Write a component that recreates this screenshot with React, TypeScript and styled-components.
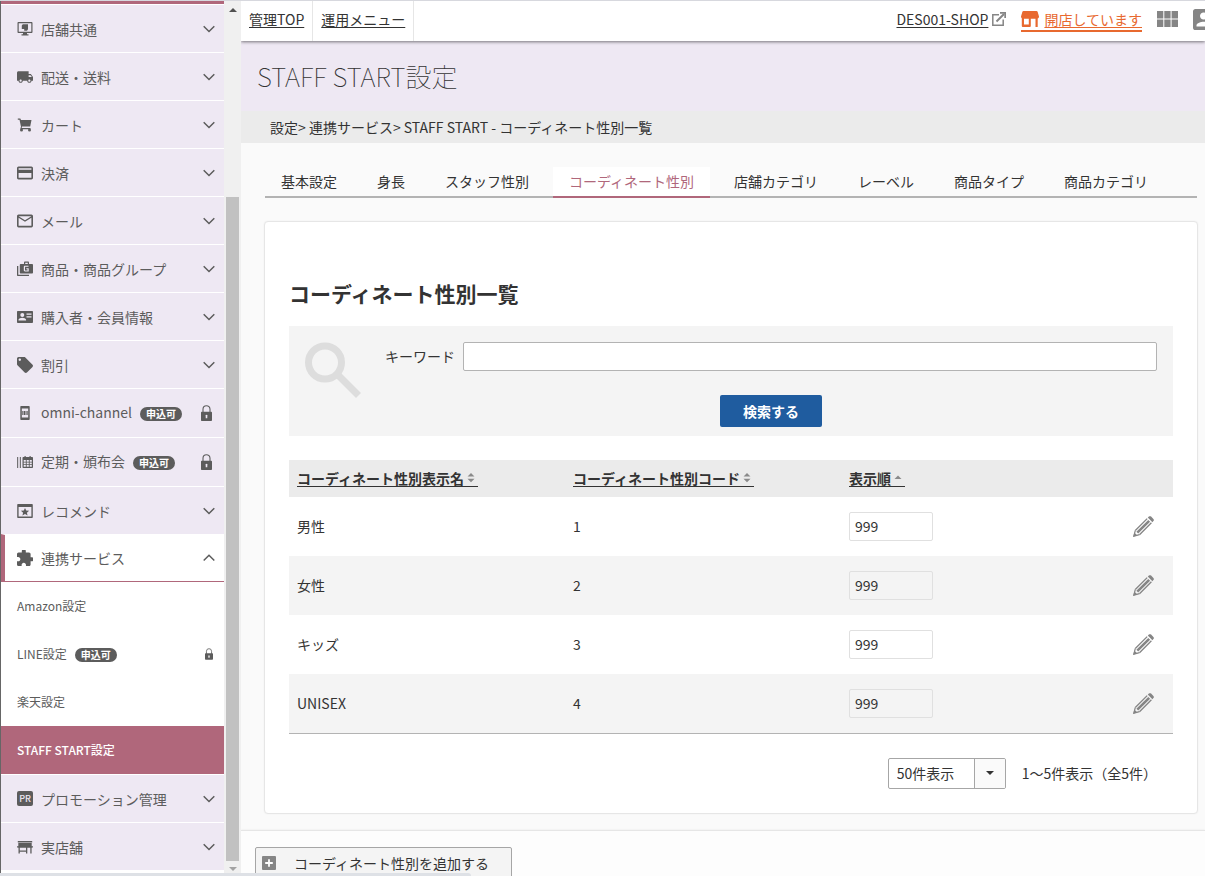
import React from "react";
import styled, { createGlobalStyle, css } from "styled-components";
import {
  MdCreditCard,
  MdExtension,
  MdLocalOffer,
  MdLocalShipping,
  MdMailOutline,
} from "react-icons/md";

const color = {
  text: "#333333",
  menuText: "#5c5c5c",
  accent: "#b0677b",
  lilac: "#eee8f3",
  line: "#b3b3b3",
  icon: "#858585",
  open: "#e8692f",
};

const GlobalStyle = createGlobalStyle`
  *, *::before, *::after { box-sizing: border-box; }
  body {
    margin: 0;
    background: #fafafa;
    color: ${color.text};
    font-family: "Noto Sans CJK JP", "Noto Sans", sans-serif;
    font-size: 14px;
    line-height: 20px;
  }
  button, input, select { font: inherit; color: inherit; }
  svg { display: block; flex: none; }
`;

/* ---------- frame ---------- */

const Shell = styled.div`
  display: flex;
  height: 100vh;
  border-top: 1px solid #d7d8de;
  overflow: hidden;
`;

const Sidebar = styled.aside`
  display: flex;
  flex: none;
  width: 241px;
  border-left: 1px solid #666;
  background: #fff;
`;

const Menu = styled.nav`
  flex: 1;
  border-top: 3px solid ${color.accent};
  overflow: auto;
  scrollbar-width: none;
`;

const Main = styled.div`
  flex: 1;
  min-width: 0;
  overflow: auto;
  scrollbar-width: none;
`;

const StatusBar = styled.div`
  position: absolute;
  left: 0;
  bottom: 0;
  width: 471px;
  height: 3px;
  border-top-right-radius: 3px;
  background: #dee1e6;
`;

/* ---------- scroll bar ---------- */

const Track = styled.div`
  display: flex;
  flex-direction: column;
  align-items: center;
  flex: none;
  width: 17px;
  background: #f0f0f0;
`;

const TrackEnd = styled.span<{ $height: number }>`
  display: grid;
  place-items: center;
  width: 17px;
  height: ${(p) => p.$height}px;
`;

const TrackSpace = styled.span`
  flex: 179;
`;

const Thumb = styled.span`
  flex: 664;
  width: 13px;
  background: #c1c1c1;
`;

/* ---------- side menu ---------- */

const List = styled.ul`
  margin: 0;
  padding: 0;
  list-style: none;
`;

const MenuButton = styled.button<{ $open?: boolean; $tall?: boolean }>`
  display: flex;
  align-items: center;
  gap: 8px;
  width: 100%;
  height: ${(p) => (p.$tall ? 49 : 48)}px;
  padding: 0 7px 0 16px;
  border: 0;
  border-top: 1px solid #fff;
  background: ${color.lilac};
  color: ${color.menuText};
  text-align: left;
  cursor: pointer;
  ${(p) =>
    p.$open &&
    css`
      padding-left: 12px;
      border-left: 4px solid ${color.accent};
      border-bottom: 1px solid ${color.accent};
      background: #fff;
    `}
`;

const SubLink = styled.a<{ $current?: boolean }>`
  display: flex;
  align-items: center;
  gap: 8px;
  height: 48px;
  padding: 0 7px 0 16px;
  background: ${(p) => (p.$current ? color.accent : "#fff")};
  color: ${(p) => (p.$current ? "#fff" : color.menuText)};
  font-size: 12px;
  font-weight: ${(p) => (p.$current ? 500 : 400)};
  text-decoration: none;
`;

const IconSlot = styled.span`
  display: grid;
  place-items: center;
  flex: none;
  width: 16px;
  height: 16px;
`;

const MenuLabel = styled.span<{ $tall?: boolean }>`
  padding-bottom: ${(p) => (p.$tall ? 2 : 0)}px;
  white-space: nowrap;
`;

const Badge = styled.span`
  margin-top: 1px;
  padding: 0 6px;
  border-radius: 7px;
  background: ${color.menuText};
  color: #fff;
  font-size: 10px;
  font-weight: 700;
  line-height: 14px;
`;

const EndSlot = styled(IconSlot)`
  margin-left: auto;
`;

const LockSlot = styled(EndSlot)`
  justify-items: start;
`;

const PrMark = styled.span`
  width: 16px;
  border-radius: 2px;
  background: ${color.menuText};
  color: ${color.lilac};
  font-size: 9px;
  font-weight: 500;
  line-height: 15px;
  text-align: center;
`;

/* ---------- top bar ---------- */

const TopBar = styled.header`
  position: relative;
  z-index: 1;
  display: flex;
  height: 40px;
  background: #fff;
  box-shadow: 0 1px 3px rgba(0, 0, 0, 0.5);
  overflow: hidden;
`;

const TopCell = styled.div`
  padding: 8px;
  border-right: 1px solid #e6e6e6;
`;

const TopLink = styled.a`
  color: inherit;
  text-underline-offset: 2px;
`;

const TopTools = styled.div`
  display: flex;
  align-items: center;
  gap: 15px;
  height: 36px;
  margin-left: auto;
  margin-right: -9px;
`;

const ShopLink = styled.span`
  display: flex;
  align-items: center;
  gap: 4px;
`;

const OpenLink = styled.a`
  display: flex;
  align-items: center;
  gap: 5px;
  margin-top: 3px;
  padding-bottom: 1px;
  border-bottom: 2px solid ${color.open};
  color: ${color.open};
  text-underline-offset: 2px;
`;

const ToolButton = styled.button`
  display: flex;
  padding: 0;
  border: 0;
  background: none;
`;

/* ---------- page head ---------- */

const TitleBand = styled.div`
  padding: 15px 16px;
  background: ${color.lilac};
`;

const Title = styled.h1`
  margin: 0;
  font-size: 26px;
  font-weight: 100;
  line-height: 40px;
`;

const Crumbs = styled.div`
  padding: 6px 29px;
  background: #ebebeb;
`;

const Content = styled.main`
  padding: 24px 7px 16px 23px;
`;

const Tabs = styled.nav`
  display: flex;
  gap: 8px;
  margin: 0 1px;
  border-bottom: 2px solid ${color.line};
`;

const Tab = styled.a<{ $current?: boolean }>`
  margin-bottom: -2px;
  padding: 4px 16px 5px;
  border-bottom: 2px solid ${(p) => (p.$current ? color.accent : "transparent")};
  background: ${(p) => (p.$current ? "#fff" : "transparent")};
  color: ${(p) => (p.$current ? color.accent : "inherit")};
  text-decoration: none;
  white-space: nowrap;
`;

/* ---------- card ---------- */

const Card = styled.section`
  margin-top: 23px;
  padding: 56px 24px 24px;
  border: 1px solid #e6e6e6;
  border-radius: 4px;
  background: #fff;
  box-shadow: 0 0 2px rgba(0, 0, 0, 0.06);
`;

const Heading = styled.h2`
  margin: 0 0 18px;
  font-size: 21px;
  font-weight: 700;
  line-height: 30px;
`;

const SearchPanel = styled.form`
  display: flex;
  gap: 24px;
  padding: 16px 16px 9px;
  background: #f4f4f4;
`;

const SearchFields = styled.div`
  display: flex;
  flex: 1;
  flex-direction: column;
  align-items: center;
  gap: 24px;
`;

const Field = styled.label`
  display: flex;
  align-items: center;
  gap: 8px;
  width: 100%;
  line-height: 21px;
`;

const KeywordInput = styled.input`
  flex: 1;
  height: 29px;
  padding: 0 6px;
  border: 1px solid ${color.line};
  border-radius: 2px;
  background: #fff;
`;

const SearchButton = styled.button`
  height: 32px;
  padding: 0 23px;
  border: 0;
  border-radius: 2px;
  background: #1f5c9f;
  color: #fff;
  font-weight: 700;
`;

const Table = styled.table`
  width: 100%;
  margin-top: 24px;
  border-collapse: collapse;
  border-bottom: 1px solid ${color.line};
  line-height: 21px;
  table-layout: fixed;
`;

const HeadCell = styled.th<{ $narrow?: boolean }>`
  width: ${(p) => (p.$narrow ? "56px" : "auto")};
  height: 37px;
  padding: 0 8px;
  background: #ebebeb;
  text-align: left;
`;

const SortLink = styled.a`
  display: inline-flex;
  align-items: center;
  border-bottom: 1px solid ${color.text};
  color: inherit;
  line-height: 16px;
  text-decoration: none;
`;

const Row = styled.tr`
  &:nth-child(even) {
    background: #f4f4f4;
  }
`;

const Cell = styled.td`
  height: 59px;
  padding: 0 8px;
`;

const ActionCell = styled(Cell)`
  padding: 0 16px;
`;

const OrderInput = styled.input`
  display: block;
  width: 84px;
  height: 29px;
  padding: 0 5px 1px;
  border: 1px solid #e0e0e0;
  border-radius: 2px;
  background: transparent;
`;

const EditButton = styled.button`
  display: block;
  padding: 0;
  border: 0;
  background: none;
`;

const Pager = styled.div`
  display: flex;
  align-items: center;
  justify-content: flex-end;
  gap: 16px;
  margin-top: 24px;
  padding-right: 16px;
`;

const SelectBox = styled.div`
  position: relative;
  width: 118px;
  height: 31px;
  border: 1px solid #a6a6a6;
  border-radius: 2px;
  background: #fff;
  overflow: hidden;
`;

const Select = styled.select`
  width: 100%;
  height: 100%;
  padding: 0 8px;
  border: 0;
  background: none;
  appearance: none;
`;

const SelectArrow = styled.span`
  position: absolute;
  top: 0;
  right: 0;
  bottom: 0;
  display: grid;
  place-items: center;
  width: 31px;
  border-left: 1px solid #a6a6a6;
  background: #fafafa;
  pointer-events: none;
`;

const Footer = styled.footer`
  padding: 16px 14px;
  border-top: 1px solid #e6e6e6;
  background: #fdfdfd;
  box-shadow: 0 0 2px rgba(0, 0, 0, 0.08);
`;

const AddButton = styled.button`
  display: flex;
  align-items: center;
  gap: 18px;
  height: 34px;
  padding: 0 22px 2px 6px;
  border: 1px solid #a6a6a6;
  border-radius: 2px;
  background: #f4f4f4;
`;

/* ---------- drawings ---------- */

const small = { width: 16, height: 16, viewBox: "0 0 16 16", fill: "currentColor", "aria-hidden": true };

const IconMonitor = () => (
  <svg {...small}>
    <path d="M1.5 1h13c.5 0 1 .4 1 1v9c0 .6-.5 1-1 1H10v1.300h1.500V14.500h-7V13.300H6V12H1.500c-.5 0-1-.4-1-1V2c0-.6.5-1 1-1zm.2 1.200v8.600h12.600V2.200z" fillRule="evenodd" />
    <path d="M4.800 4.500 5.800 3.200h5.200V8.200l-1 1.500H7.200V8H4.800z" />
  </svg>
);

const IconCart = () => (
  <svg {...small}>
    <path d="M.8 1.500h2.500l.7 1.500h10.500l-1.300 6.500H5l-.3 1.500H13.500v1.200H3.200L4 9.800 2.500 2.700H.8z" />
    <circle cx="4.500" cy="13" r="1.500" />
    <circle cx="12.500" cy="13" r="1.500" />
  </svg>
);

const IconGroup = () => (
  <svg {...small}>
    <path d="M0 5h1.300v8.700H12V15H1c-.6 0-1-.4-1-1z" />
    <path
      fillRule="evenodd"
      d="M3.800 3H7V1.500c0-.5.4-1 1-1h3c.6 0 1 .5 1 1V3h3c.5 0 1 .4 1 1v7.500c0 .6-.5 1-1 1H3.800c-.5 0-1-.4-1-1V4c0-.6.5-1 1-1zM8.200 3h2.600V1.700H8.200zM8 4.700c-.7 0-1.200.5-1.200 1.200v3.400c0 .7.5 1.200 1.200 1.200h3.700V7.200H9.300v1h1.200v1.200H8V5.800h3.500V4.700z"
    />
  </svg>
);

const IconMember = () => (
  <svg {...small}>
    <path
      fillRule="evenodd"
      d="M1 2h14c.6 0 1 .4 1 1v10c0 .5-.4 1-1 1H1c-.6 0-1-.5-1-1V3c0-.6.4-1 1-1zm4.300 2a2 2 0 1 0 0 4 2 2 0 0 0 0-4zM1.500 11.500h7.600v-.7c0-1.300-2.500-2-3.800-2s-3.800.7-3.800 2zM9.500 4.500v1.300h5V4.500zm0 2.700v1.300h5V7.200z"
    />
  </svg>
);

const IconPhone = () => (
  <svg {...small}>
    <path
      fillRule="evenodd"
      d="M4.300 1h7.400c.6 0 1 .4 1 1v12c0 .6-.4 1-1 1H4.300c-.6 0-1-.4-1-1V2c0-.6.4-1 1-1zm.5 2.500v9h6.400v-9z"
    />
    <path d="M5.300 6h1.200v4H5.300zM7 6h1.200v4H7zM8.700 6h.6v4h-.6zM9.700 6h1v4h-1z" />
  </svg>
);

const IconCalendar = () => (
  <svg {...small}>
    <path d="M0 3h1.200v11H0zM2.800 3H4v11H2.800z" opacity=".85" />
    <path
      fillRule="evenodd"
      d="M6.500 3h1V2h1.200v1h3.800V2h1.200v1H15c.6 0 1 .4 1 1v9c0 .6-.4 1-1 1H6.500c-.6 0-1-.4-1-1V4c0-.6.4-1 1-1zm.2 3v1.800h2.100V6zm3 0v1.800h2.100V6zm3 0v1.800h2.100V6zM6.700 8.600v1.700h2.100V8.600zm3 0v1.700h2.100V8.600zm3 0v1.700h2.100V8.600zM6.700 11v1.800h2.100V11zm3 0v1.800h2.100V11zm3 0v1.800h2.100V11z"
    />
  </svg>
);

const IconStarWindow = () => (
  <svg {...small}>
    <path
      fillRule="evenodd"
      d="M1.200 1h13.600c.6 0 1 .4 1 1v12c0 .6-.4 1-1 1H1.200c-.6 0-1-.4-1-1V2c0-.6.4-1 1-1zM1.600 4v9.600h12.800V4z"
    />
    <path d="m8 4.900 1.200 2.700 2.900.2-2.200 1.900.7 2.900L8 11l-2.600 1.600.7-2.900-2.200-1.900 2.900-.2z" />
  </svg>
);

const IconRealShop = () => (
  <svg {...small}>
    <path d="M.8 2h14.400v1.400H.8zM1.300 4h13.400v4.400H1.300z" />
    <path d="M0 7.300h16v1.300H0zM1.500 8h1.300v6.500H1.500zM9 8h1.300v6.500H9zM13.300 8h1.300v6.500h-1.300zM2.500 11.500H9v1.200H2.500z" />
  </svg>
);

const Chevron = ({ up }: { up?: boolean }) => (
  <svg width="12" height="8" viewBox="0 0 12 8" fill="none" stroke="currentColor" strokeWidth="1.500" aria-hidden>
    <path d={up ? "M.7 6.500 6 1.200l5.300 5.300" : "M.7 1.200 6 6.500l5.300-5.300"} />
  </svg>
);

const Lock = ({ small: isSmall }: { small?: boolean }) => (
  <svg width={isSmall ? 8 : 11} height={isSmall ? 12 : 16} viewBox="0 0 11 16" aria-hidden>
    <path d="M2 8V4.200a3.500 3.500 0 0 1 7 0V8" fill="none" stroke="#5c5c5c" strokeWidth="1.100" />
    <path
      fill="#5c5c5c"
      fillRule="evenodd"
      d="M1 6.800h9c.5 0 1 .4 1 1V15c0 .6-.5 1-1 1H1c-.6 0-1-.4-1-1V7.800c0-.6.4-1 1-1zm4.500 3a1 1 0 0 0-.8 1.600v1.800h1.600v-1.800a1 1 0 0 0-.8-1.600z"
    />
  </svg>
);

const Triangle = ({ up, fill }: { up?: boolean; fill: string }) => (
  <svg width="8" height="4" viewBox="0 0 8 4" fill={fill} aria-hidden>
    <path d={up ? "M0 4 4 0l4 4z" : "M0 0h8L4 4z"} />
  </svg>
);

const SortMark = ({ both }: { both?: boolean }) => (
  <svg width="14" height="12" viewBox="0 0 14 12" fill="#8a8a8a" aria-hidden>
    {both ? <path d="M3.500 4.500 7 1l3.500 3.500zM3.500 6.800h7L7 10.300z" /> : <path d="M3.500 7 7 3.500 10.500 7z" />}
  </svg>
);

const IconExternal = () => (
  <svg width="14" height="14" viewBox="0 0 14 14" fill="none" stroke={color.icon} aria-hidden>
    <path d="M7 2.700H.8v10.500h10.400V7.500" strokeWidth="1.500" />
    <path d="m4.500 9.500 7.500-7.500" strokeWidth="2" />
    <path d="M8 .9h5.200V6" strokeWidth="1.800" />
  </svg>
);

const IconOpenShop = () => (
  <svg width="18" height="16" viewBox="0 0 18 16" fill={color.open} aria-hidden>
    <path
      fillRule="evenodd"
      d="M2.500 0h13c.6 0 1 .3 1.200.9L18 5.500c0 1.100-.5 1.800-1.300 2V16h-2.200V7.700h-4.700V15c0 .6-.3 1-.9 1H1.700c-.6 0-.9-.4-.9-1V7.300C.2 7 0 6.400 0 5.500L1.300.9C1.500.3 1.900 0 2.500 0zM3 7.700v5.800h4.800V7.700z"
    />
  </svg>
);

const IconApps = () => (
  <svg width="21" height="16" viewBox="0 0 21 16" fill={color.icon} aria-hidden>
    <path d="M0 0h6.300v7.500H0zM7.300 0h6.300v7.500H7.300zM14.600 0H21v7.500h-6.400zM0 8.500h6.300V16H0zM7.300 8.500h6.300V16H7.300zM14.600 8.500H21V16h-6.400z" />
  </svg>
);

const IconAccount = () => (
  <svg width="21" height="21" viewBox="3 3 18 18" fill={color.icon} aria-hidden>
    <path d="M3 5v14c0 1.100.89 2 2 2h14c1.100 0 2-.9 2-2V5c0-1.100-.9-2-2-2H5c-1.110 0-2 .9-2 2zm12 4c0 1.660-1.340 3-3 3s-3-1.340-3-3 1.340-3 3-3 3 1.340 3 3zm-9 8c0-2 4-3.100 6-3.100s6 1.100 6 3.100v1H6v-1z" />
  </svg>
);

const IconSearch = () => (
  <svg width="56" height="56" viewBox="0 0 56 56" fill="none" stroke="#dddddd" strokeWidth="7" aria-hidden>
    <circle cx="20" cy="20.500" r="16.500" />
    <path d="m32 32 21.500 21.500" />
  </svg>
);

const IconPencil = () => (
  <svg width="21" height="21" viewBox="0 0 21 21" fill="none" stroke={color.icon} aria-hidden>
    <path d="M2.300 14.500 14.200 2.600M6.500 18.700 18.400 6.800" strokeWidth="1.300" />
    <path d="M4.300 16.700 16.200 4.800" strokeWidth="2.600" />
    <path d="M2.300 14.500.8 20.200l5.700-1.500" strokeWidth="1.200" />
    <path d="M1.400 16.600.2 20.800l4.200-1.200z" fill={color.icon} stroke="none" />
    <path d="M14.800 1.600 15.900.6c.7-.6 1.500-.6 2.200 0l2.300 2.300c.6.7.6 1.500 0 2.200L19.400 6.200z" fill={color.icon} stroke="none" />
  </svg>
);

const IconPlus = () => (
  <svg width="14" height="14" viewBox="0 0 14 14" aria-hidden>
    <rect width="14" height="14" rx="1" fill="#858585" />
    <path d="M7 3.200v7.600M3.200 7h7.600" stroke="#fff" strokeWidth="1.800" />
  </svg>
);

/* ---------- data ---------- */

type MenuItem = { label: string; icon: React.ReactNode; locked?: boolean };

const crop = { size: 16, viewBox: "2 2 20 20" };

const upperMenu: MenuItem[] = [
  { label: "店舗共通", icon: <IconMonitor /> },
  { label: "配送・送料", icon: <MdLocalShipping size={16} viewBox="1 1 22 22" /> },
  { label: "カート", icon: <IconCart /> },
  { label: "決済", icon: <MdCreditCard {...crop} /> },
  { label: "メール", icon: <MdMailOutline {...crop} /> },
  { label: "商品・商品グループ", icon: <IconGroup /> },
  { label: "購入者・会員情報", icon: <IconMember /> },
  { label: "割引", icon: <MdLocalOffer {...crop} /> },
  { label: "omni-channel", icon: <IconPhone />, locked: true },
  { label: "定期・頒布会", icon: <IconCalendar />, locked: true },
  { label: "レコメンド", icon: <IconStarWindow /> },
];

const lowerMenu: MenuItem[] = [
  { label: "プロモーション管理", icon: <PrMark>PR</PrMark> },
  { label: "実店舗", icon: <IconRealShop /> },
];

const services = [
  { label: "Amazon設定" },
  { label: "LINE設定", locked: true },
  { label: "楽天設定" },
  { label: "STAFF START設定", current: true },
];

const tabs = ["基本設定", "身長", "スタッフ性別", "コーディネート性別", "店舗カテゴリ", "レーベル", "商品タイプ", "商品カテゴリ"];

const rows = [
  { name: "男性", code: 1 },
  { name: "女性", code: 2 },
  { name: "キッズ", code: 3 },
  { name: "UNISEX", code: 4 },
];

const MenuRow = ({ item }: { item: MenuItem }) => (
  <li>
    <MenuButton type="button" $tall={item.locked}>
      <IconSlot>{item.icon}</IconSlot>
      <MenuLabel $tall={item.locked}>{item.label}</MenuLabel>
      {item.locked && <Badge>申込可</Badge>}
      {item.locked ? (
        <LockSlot>
          <Lock />
        </LockSlot>
      ) : (
        <EndSlot>
          <Chevron />
        </EndSlot>
      )}
    </MenuButton>
  </li>
);

export default function App() {
  return (
    <>
      <GlobalStyle />
      <Shell>
        <Sidebar>
          <Menu>
            <List>
              {upperMenu.map((item) => (
                <MenuRow key={item.label} item={item} />
              ))}
              <li>
                <MenuButton type="button" $open aria-expanded>
                  <IconSlot>
                    <MdExtension {...crop} />
                  </IconSlot>
                  <MenuLabel>連携サービス</MenuLabel>
                  <EndSlot>
                    <Chevron up />
                  </EndSlot>
                </MenuButton>
                <List>
                  {services.map((s) => (
                    <li key={s.label}>
                      <SubLink href="#" $current={s.current}>
                        <MenuLabel>{s.label}</MenuLabel>
                        {s.locked && (
                          <>
                            <Badge>申込可</Badge>
                            <EndSlot>
                              <Lock small />
                            </EndSlot>
                          </>
                        )}
                      </SubLink>
                    </li>
                  ))}
                </List>
              </li>
              {lowerMenu.map((item) => (
                <MenuRow key={item.label} item={item} />
              ))}
            </List>
          </Menu>
          <Track aria-hidden>
            <TrackEnd $height={17}>
              <Triangle up fill="#505050" />
            </TrackEnd>
            <TrackSpace />
            <Thumb />
            <TrackEnd $height={15}>
              <Triangle fill="#a3a3a3" />
            </TrackEnd>
          </Track>
        </Sidebar>

        <Main>
          <TopBar>
            <TopCell>
              <TopLink href="#">管理TOP</TopLink>
            </TopCell>
            <TopCell>
              <TopLink href="#">運用メニュー</TopLink>
            </TopCell>
            <TopTools>
              <ShopLink>
                <TopLink href="#">DES001-SHOP</TopLink>
                <IconExternal />
              </ShopLink>
              <OpenLink href="#">
                <IconOpenShop />
                開店しています
              </OpenLink>
              <ToolButton type="button" aria-label="アプリ">
                <IconApps />
              </ToolButton>
              <ToolButton type="button" aria-label="アカウント">
                <IconAccount />
              </ToolButton>
            </TopTools>
          </TopBar>

          <TitleBand>
            <Title>STAFF START設定</Title>
          </TitleBand>
          <Crumbs>設定&gt; 連携サービス&gt; STAFF START - コーディネート性別一覧</Crumbs>

          <Content>
            <Tabs>
              {tabs.map((t) => (
                <Tab key={t} href="#" $current={t === "コーディネート性別"}>
                  {t}
                </Tab>
              ))}
            </Tabs>

            <Card>
              <Heading>コーディネート性別一覧</Heading>
              <SearchPanel onSubmit={(e) => e.preventDefault()}>
                <IconSearch />
                <SearchFields>
                  <Field>
                    キーワード
                    <KeywordInput type="text" />
                  </Field>
                  <SearchButton type="submit">検索する</SearchButton>
                </SearchFields>
              </SearchPanel>

              <Table>
                <thead>
                  <tr>
                    <HeadCell>
                      <SortLink href="#">
                        コーディネート性別表示名
                        <SortMark both />
                      </SortLink>
                    </HeadCell>
                    <HeadCell>
                      <SortLink href="#">
                        コーディネート性別コード
                        <SortMark both />
                      </SortLink>
                    </HeadCell>
                    <HeadCell>
                      <SortLink href="#">
                        表示順
                        <SortMark />
                      </SortLink>
                    </HeadCell>
                    <HeadCell $narrow />
                  </tr>
                </thead>
                <tbody>
                  {rows.map((r) => (
                    <Row key={r.code}>
                      <Cell>{r.name}</Cell>
                      <Cell>{r.code}</Cell>
                      <Cell>
                        <OrderInput type="text" defaultValue="999" aria-label={`${r.name}の表示順`} />
                      </Cell>
                      <ActionCell>
                        <EditButton type="button" aria-label={`${r.name}を編集`}>
                          <IconPencil />
                        </EditButton>
                      </ActionCell>
                    </Row>
                  ))}
                </tbody>
              </Table>

              <Pager>
                <SelectBox>
                  <Select aria-label="表示件数" defaultValue="50">
                    <option value="50">50件表示</option>
                    <option value="100">100件表示</option>
                  </Select>
                  <SelectArrow>
                    <Triangle fill="#333" />
                  </SelectArrow>
                </SelectBox>
                <span>1〜5件表示（全5件）</span>
              </Pager>
            </Card>
          </Content>

          <Footer>
            <AddButton type="button">
              <IconPlus />
              コーディネート性別を追加する
            </AddButton>
          </Footer>
        </Main>
      </Shell>
      <StatusBar />
    </>
  );
}
